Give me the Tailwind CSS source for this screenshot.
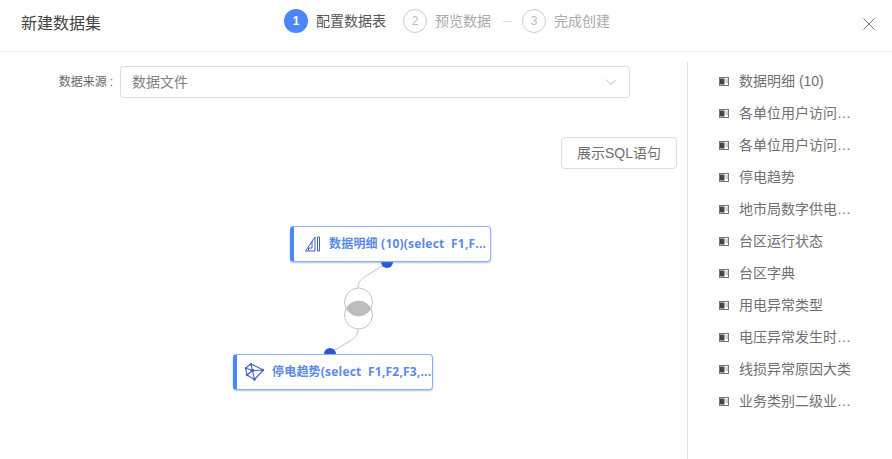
<!DOCTYPE html>
<html>
<head>
  <meta charset="UTF-8" />
  <meta name="viewport" content="width=device-width, initial-scale=1.0" />
  <script src="https://cdn.jsdelivr.net/npm/@tailwindcss/browser@4"></script>
</head>
<body class="bg-white h-[459px] overflow-hidden font-['Liberation_Sans','Noto_Sans_CJK_SC',sans-serif] text-[#666]">
  <header class="h-[52px] border-b border-[#e8e8e8] relative flex">
    <h1 class="ml-[21px] mt-[13px] text-base leading-[22px] text-[#444]">新建数据集</h1>
    <div class="absolute left-[284px] top-[9px] flex items-center text-sm">
      <span class="w-6 h-6 rounded-full bg-[#4a86f7] text-white text-xs font-bold flex items-center justify-center">1</span>
      <span class="ml-2 text-[#555]">配置数据表</span>
      <span class="ml-[17px] w-6 h-6 rounded-full border border-[#ccc] text-[#bbb] text-xs flex items-center justify-center">2</span>
      <span class="ml-2 text-[#aaa]">预览数据</span>
      <span class="ml-3 w-2 h-px bg-[#ddd]"></span>
      <span class="ml-[11px] w-6 h-6 rounded-full border border-[#ccc] text-[#bbb] text-xs flex items-center justify-center">3</span>
      <span class="ml-2 text-[#aaa]">完成创建</span>
    </div>
    <svg class="absolute left-[863px] top-[18px] w-3 h-3" viewBox="0 0 12 12" fill="none" stroke="#777" stroke-width="1"><path d="M0.500 0.500l11 11M11.500 0.500l-11 11"/></svg>
  </header>
  <main class="flex h-[407px]">
    <section class="w-[687px] relative">
      <div class="flex items-center mt-[14px]">
        <label class="w-[114px] text-right text-xs text-[#666] pr-px">数据来源<span class="ml-[3px]">:</span></label>
        <div class="ml-[6px] w-[510px] h-8 border border-[#ddd] rounded flex items-center justify-between pl-[11px] pr-3 text-sm text-[#808080]">
          <span>数据文件</span>
          <svg class="w-3 h-3" viewBox="0 0 12 12" fill="none" stroke="#bbb"><path d="M1 3.500l5 5 5-5"/></svg>
        </div>
      </div>
      <div class="flex justify-end pr-[10px] mt-[39px]">
        <button class="w-[116px] h-8 border border-[#ddd] rounded text-sm text-[#707070]">展示SQL语句</button>
      </div>

      <svg class="absolute left-0 top-0 w-[687px] h-[407px]" viewBox="0 52 687 407" fill="none">
        <path d="M384 265L366 276c-5 3-8 6-8 12M358 329c0 6-3 9-8 12L333 351" stroke="#c4c4c4"/>
        <circle cx="358.500" cy="302" r="14" stroke="#c4c4c4" fill="#fff"/>
        <circle cx="358.500" cy="315" r="14" stroke="#c4c4c4"/>
        <path d="M347 308.500c6-9 17-9 23.500 0c-6.500 9-17.500 9-23.500 0z" fill="#bdbdbd" stroke="#b4b4b4"/>
        <circle cx="387" cy="262" r="6" fill="#2c55d8"/>
        <circle cx="330" cy="354" r="6" fill="#2c55d8"/>
      </svg>

      <div class="absolute left-[290px] top-[174px] w-[201px] h-[36px] bg-white border border-[#8fb0f2] border-l-4 border-l-[#4a86f7] rounded-sm flex items-center text-xs font-bold text-[#5b8ae8] font-['Open_Sans','Noto_Sans_CJK_SC',sans-serif] shadow-[0_1px_2px_rgba(74,134,247,0.5)]">
        <svg class="ml-[11px] w-[15px] h-4 shrink-0" viewBox="0 0 15 16" fill="none" stroke="#3f5fc4" stroke-width="1"><path d="M0.500 15L10 1v14zM3.500 15v-3h3.500M7 5v7M12.500 1h2v14h-2z"/></svg>
        <span class="ml-[9px] whitespace-nowrap tracking-[0.2px]">数据明细 (10)(select&nbsp; F1,F...</span>
      </div>
      <div class="absolute left-[233px] top-[302px] w-[200px] h-[36px] bg-white border border-[#8fb0f2] border-l-4 border-l-[#4a86f7] rounded-sm flex items-center text-xs font-bold text-[#5b8ae8] font-['Open_Sans','Noto_Sans_CJK_SC',sans-serif] shadow-[0_1px_2px_rgba(74,134,247,0.5)]">
        <svg class="ml-[8px] w-[19px] h-[18px] shrink-0" viewBox="0 0 19 18" fill="none" stroke="#3f5fc4" stroke-width="1.100"><path d="M6 1L18.500 7 9.500 16.500 2 12 .5 5zM6 1l1.500 6.500 2 9M.5 5l7 2.500L18.500 7M2 12l5.500-4.500"/><g fill="#3f5fc4" stroke="none"><circle cx="7.500" cy="7.500" r="1.800"/><circle cx="6" cy="1.500" r="1.200"/><circle cx="18" cy="7" r="1.200"/><circle cx="9.500" cy="16.500" r="1.200"/><circle cx="2" cy="12" r="1.200"/><circle cx="1" cy="5" r="1.200"/></g></svg>
        <span class="ml-2 whitespace-nowrap tracking-[0.2px]">停电趋势(select&nbsp; F1,F2,F3,...</span>
      </div>
    </section>

    <aside class="flex-1 mt-[10px] border-l border-[#e0e0e0] pl-[31px] pt-[3px] text-sm text-[#707070]">
      <ul class="flex flex-col">
        <li class="h-8 flex items-center gap-[10px]"><svg class="w-[10px] h-[9px] shrink-0" viewBox="0 0 10 9"><rect x="0.500" y="0.500" width="9" height="8" fill="none" stroke="#777"/><rect x="1" y="1.500" width="4.500" height="6" fill="#444"/><path d="M6.500 3h2.500M6.500 5h2.500" stroke="#999"/></svg><span class="whitespace-nowrap">数据明细 (10)</span></li>
        <li class="h-8 flex items-center gap-[10px]"><svg class="w-[10px] h-[9px] shrink-0" viewBox="0 0 10 9"><rect x="0.500" y="0.500" width="9" height="8" fill="none" stroke="#777"/><rect x="1" y="1.500" width="4.500" height="6" fill="#444"/><path d="M6.500 3h2.500M6.500 5h2.500" stroke="#999"/></svg><span class="whitespace-nowrap">各单位用户访问…</span></li>
        <li class="h-8 flex items-center gap-[10px]"><svg class="w-[10px] h-[9px] shrink-0" viewBox="0 0 10 9"><rect x="0.500" y="0.500" width="9" height="8" fill="none" stroke="#777"/><rect x="1" y="1.500" width="4.500" height="6" fill="#444"/><path d="M6.500 3h2.500M6.500 5h2.500" stroke="#999"/></svg><span class="whitespace-nowrap">各单位用户访问…</span></li>
        <li class="h-8 flex items-center gap-[10px]"><svg class="w-[10px] h-[9px] shrink-0" viewBox="0 0 10 9"><rect x="0.500" y="0.500" width="9" height="8" fill="none" stroke="#777"/><rect x="1" y="1.500" width="4.500" height="6" fill="#444"/><path d="M6.500 3h2.500M6.500 5h2.500" stroke="#999"/></svg><span class="whitespace-nowrap">停电趋势</span></li>
        <li class="h-8 flex items-center gap-[10px]"><svg class="w-[10px] h-[9px] shrink-0" viewBox="0 0 10 9"><rect x="0.500" y="0.500" width="9" height="8" fill="none" stroke="#777"/><rect x="1" y="1.500" width="4.500" height="6" fill="#444"/><path d="M6.500 3h2.500M6.500 5h2.500" stroke="#999"/></svg><span class="whitespace-nowrap">地市局数字供电…</span></li>
        <li class="h-8 flex items-center gap-[10px]"><svg class="w-[10px] h-[9px] shrink-0" viewBox="0 0 10 9"><rect x="0.500" y="0.500" width="9" height="8" fill="none" stroke="#777"/><rect x="1" y="1.500" width="4.500" height="6" fill="#444"/><path d="M6.500 3h2.500M6.500 5h2.500" stroke="#999"/></svg><span class="whitespace-nowrap">台区运行状态</span></li>
        <li class="h-8 flex items-center gap-[10px]"><svg class="w-[10px] h-[9px] shrink-0" viewBox="0 0 10 9"><rect x="0.500" y="0.500" width="9" height="8" fill="none" stroke="#777"/><rect x="1" y="1.500" width="4.500" height="6" fill="#444"/><path d="M6.500 3h2.500M6.500 5h2.500" stroke="#999"/></svg><span class="whitespace-nowrap">台区字典</span></li>
        <li class="h-8 flex items-center gap-[10px]"><svg class="w-[10px] h-[9px] shrink-0" viewBox="0 0 10 9"><rect x="0.500" y="0.500" width="9" height="8" fill="none" stroke="#777"/><rect x="1" y="1.500" width="4.500" height="6" fill="#444"/><path d="M6.500 3h2.500M6.500 5h2.500" stroke="#999"/></svg><span class="whitespace-nowrap">用电异常类型</span></li>
        <li class="h-8 flex items-center gap-[10px]"><svg class="w-[10px] h-[9px] shrink-0" viewBox="0 0 10 9"><rect x="0.500" y="0.500" width="9" height="8" fill="none" stroke="#777"/><rect x="1" y="1.500" width="4.500" height="6" fill="#444"/><path d="M6.500 3h2.500M6.500 5h2.500" stroke="#999"/></svg><span class="whitespace-nowrap">电压异常发生时…</span></li>
        <li class="h-8 flex items-center gap-[10px]"><svg class="w-[10px] h-[9px] shrink-0" viewBox="0 0 10 9"><rect x="0.500" y="0.500" width="9" height="8" fill="none" stroke="#777"/><rect x="1" y="1.500" width="4.500" height="6" fill="#444"/><path d="M6.500 3h2.500M6.500 5h2.500" stroke="#999"/></svg><span class="whitespace-nowrap">线损异常原因大类</span></li>
        <li class="h-8 flex items-center gap-[10px]"><svg class="w-[10px] h-[9px] shrink-0" viewBox="0 0 10 9"><rect x="0.500" y="0.500" width="9" height="8" fill="none" stroke="#777"/><rect x="1" y="1.500" width="4.500" height="6" fill="#444"/><path d="M6.500 3h2.500M6.500 5h2.500" stroke="#999"/></svg><span class="whitespace-nowrap">业务类别二级业…</span></li>
      </ul>
    </aside>
  </main>
</body>
</html>
